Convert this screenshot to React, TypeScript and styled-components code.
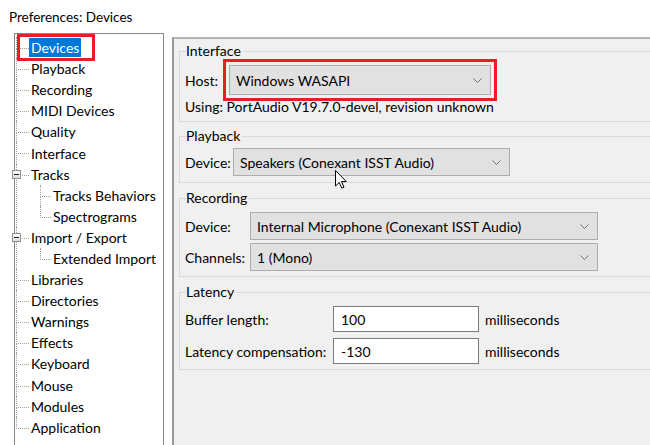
import styled, { createGlobalStyle, css } from "styled-components";

const GlobalStyle = createGlobalStyle`
  html, body {
    margin: 0;
    padding: 0;
    background: #ffffff;
    overflow: hidden;
  }
  body {
    font-family: Lato, "Liberation Sans", Arial, sans-serif;
    font-size: 14px;
    color: #000000;
  }
  * {
    box-sizing: border-box;
  }
`;

const LINE = "#a0a0a0";
const MARK = "#ec1c24";

// Window: whole preferences dialog
const Window = styled.div`
  width: 650px;
  height: 445px;
  display: flex;
  flex-direction: column;
  overflow: hidden;
`;

const TitleBar = styled.div`
  height: 33px;
  flex-shrink: 0;
  padding-left: 9px;
  display: flex;
  align-items: center;
  font-size: 13.5px;
`;

const Body = styled.div`
  flex: 1;
  min-height: 0;
  display: flex;
  align-items: stretch;
  gap: 8px;
`;

/* ---------- tree ---------- */

const Tree = styled.ul`
  margin: 0 0 -20px 14px;
  padding: 3px 0 0 0;
  width: 150px;
  list-style: none;
  background: #ffffff;
  border: 1px solid #828790;
  border-bottom: none;
  flex-shrink: 0;
`;

const SubTree = styled.ul`
  margin: 0;
  padding: 0;
  list-style: none;
`;

const Item = styled.li<{ $child?: boolean; $last?: boolean }>`
  position: relative;
  padding-left: ${({ $child }) => ($child ? 22 : 14)}px;

  /* elbow: vertical half + horizontal dash */
  &::before {
    content: "";
    position: absolute;
    left: ${({ $child }) => ($child ? 11 : 1)}px;
    top: 0;
    width: ${({ $child }) => ($child ? 10 : 12)}px;
    height: 11px;
    border-left: 1px dotted ${LINE};
    border-bottom: 1px dotted ${LINE};
  }

  ${({ $last, $child }) =>
    !$last &&
    css`
      &::after {
        content: "";
        position: absolute;
        left: ${$child ? 11 : 1}px;
        top: 11px;
        bottom: 0;
        border-left: 1px dotted ${LINE};
      }
    `}
`;

const Row = styled.div`
  height: 21.1px;
  display: flex;
  align-items: center;
  white-space: nowrap;
`;

const Label = styled.span<{ $selected?: boolean; $marked?: boolean }>`
  position: relative;
  line-height: 19px;
  padding: 0 2px;
  background: ${({ $selected }) => ($selected ? "#0078d7" : "transparent")};
  color: ${({ $selected }) => ($selected ? "#ffffff" : "#000000")};

  ${({ $marked }) =>
    $marked &&
    css`
      &::after {
        content: "";
        position: absolute;
        inset: -4px -14px -4px -12px;
        border: 3px solid ${MARK};
      }
    `}
`;

// Expander: the little [-] box on a parent node
const Expander = styled.span`
  position: absolute;
  left: -3px;
  top: 6px;
  width: 9px;
  height: 9px;
  border: 1px solid #919191;
  background: linear-gradient(#ffffff, #dcdcdc);
  z-index: 1;

  &::before {
    content: "";
    position: absolute;
    left: 1px;
    right: 1px;
    top: 3px;
    height: 1px;
    background: #1e1e1e;
  }
`;

/* ---------- right panel ---------- */

const Panel = styled.div`
  flex: 1;
  margin: 4px 0 -20px 0;
  padding-left: 5px;
  background: #f0f0f0;
  border-left: 2px solid #979797;
  border-top: 2px solid #b2b2b2;
  overflow: hidden;
`;

const Group = styled.fieldset<{ $top: number; $bottom: number }>`
  margin: ${({ $top }) => $top}px -20px 0 0;
  padding: 0 5px ${({ $bottom }) => $bottom}px 5px;
  min-width: 0;
  border: 1px solid #d8d8d8;
`;

const Legend = styled.legend`
  margin-left: 1px;
  padding: 0 2px 0 0;
  line-height: 16px;
`;

const FieldRow = styled.div<{ $top: number }>`
  display: flex;
  align-items: center;
  margin-top: ${({ $top }) => $top}px;
`;

const FieldLabel = styled.span<{ $w: number }>`
  width: ${({ $w }) => $w}px;
  flex-shrink: 0;
  white-space: nowrap;
`;

const Info = styled.div`
  margin-top: 4px;
  line-height: 16px;
  white-space: nowrap;
`;

const Combo = styled.div<{ $w: number; $h?: number; $marked?: boolean }>`
  position: relative;
  width: ${({ $w }) => $w}px;
  height: ${({ $h }) => $h ?? 28}px;
  padding: 0 8px 0 6px;
  display: flex;
  align-items: center;
  justify-content: space-between;
  background: #e1e1e1;
  border: 1px solid #adadad;
  white-space: nowrap;

  ${({ $marked }) =>
    $marked &&
    css`
      &::after {
        content: "";
        position: absolute;
        inset: -7px;
        border: 3px solid ${MARK};
      }
    `}
`;

const Grid = styled.div<{ $cols: string; $gap: number; $top: number }>`
  display: grid;
  grid-template-columns: ${({ $cols }) => $cols};
  row-gap: ${({ $gap }) => $gap}px;
  align-items: center;
  margin-top: ${({ $top }) => $top}px;
`;

const TextBox = styled.div`
  width: 146px;
  height: 26px;
  padding-left: 7px;
  display: flex;
  align-items: center;
  background: #ffffff;
  border: 1px solid #7a7a7a;
  margin-right: 6px;
`;

const Pointer = styled.svg`
  position: absolute;
  left: 101px;
  top: 21px;
`;

const Chevron = () => (
  <svg width="9" height="5" viewBox="0 0 9 5">
    <polyline points="0.5,0.5 4.5,4.5 8.5,0.5" fill="none" stroke="#707070" strokeWidth="1" />
  </svg>
);

type Node = { name: string; children?: string[] };

const nodes: Node[] = [
  { name: "Devices" },
  { name: "Playback" },
  { name: "Recording" },
  { name: "MIDI Devices" },
  { name: "Quality" },
  { name: "Interface" },
  { name: "Tracks", children: ["Tracks Behaviors", "Spectrograms"] },
  { name: "Import / Export", children: ["Extended Import"] },
  { name: "Libraries" },
  { name: "Directories" },
  { name: "Warnings" },
  { name: "Effects" },
  { name: "Keyboard" },
  { name: "Mouse" },
  { name: "Modules" },
  { name: "Application" },
];

export default function App() {
  return (
    <>
      <GlobalStyle />
      <Window>
        <TitleBar>Preferences: Devices</TitleBar>
        <Body>
          <Tree>
            {nodes.map((n, i) => (
              <Item key={n.name} $last={i === nodes.length - 1}>
                {n.children && <Expander />}
                <Row>
                  <Label $selected={i === 0} $marked={i === 0}>
                    {n.name}
                  </Label>
                </Row>
                {n.children && (
                  <SubTree>
                    {n.children.map((c, j) => (
                      <Item key={c} $child $last={j === n.children!.length - 1}>
                        <Row>
                          <Label>{c}</Label>
                        </Row>
                      </Item>
                    ))}
                  </SubTree>
                )}
              </Item>
            ))}
          </Tree>

          <Panel>
            <Group $top={4} $bottom={6}>
              <Legend>Interface</Legend>
              <FieldRow $top={6}>
                <FieldLabel $w={44}>Host:</FieldLabel>
                <Combo $w={262} $h={30} $marked>
                  <span>Windows WASAPI</span>
                  <Chevron />
                </Combo>
              </FieldRow>
              <Info>Using: PortAudio V19.7.0-devel, revision unknown</Info>
            </Group>

            <Group $top={6} $bottom={6}>
              <Legend>Playback</Legend>
              <FieldRow $top={4}>
                <FieldLabel $w={48}>Device:</FieldLabel>
                <Combo $w={277}>
                  <span>Speakers (Conexant ISST Audio)</span>
                  <Chevron />
                  <Pointer width="12" height="19" viewBox="0 0 12 19">
                    <path
                      d="M0.5 0.5 L0.5 16 L4.2 12.4 L6.8 18.2 L9 17.2 L6.5 11.6 L11.3 11.6 Z"
                      fill="#ffffff"
                      stroke="#000000"
                      strokeWidth="1"
                      strokeLinejoin="round"
                    />
                  </Pointer>
                </Combo>
              </FieldRow>
            </Group>

            <Group $top={7} $bottom={5}>
              <Legend>Recording</Legend>
              <Grid $cols="65px 348px" $gap={3} $top={6}>
                <FieldLabel $w={65}>Device:</FieldLabel>
                <Combo $w={348}>
                  <span>Internal Microphone (Conexant ISST Audio)</span>
                  <Chevron />
                </Combo>
                <FieldLabel $w={65}>Channels:</FieldLabel>
                <Combo $w={348}>
                  <span>1 (Mono)</span>
                  <Chevron />
                </Combo>
              </Grid>
            </Group>

            <Group $top={7} $bottom={5}>
              <Legend>Latency</Legend>
              <Grid $cols="148px 152px auto" $gap={6} $top={6}>
                <FieldLabel $w={148}>Buffer length:</FieldLabel>
                <TextBox>100</TextBox>
                <span>milliseconds</span>
                <FieldLabel $w={148}>Latency compensation:</FieldLabel>
                <TextBox>-130</TextBox>
                <span>milliseconds</span>
              </Grid>
            </Group>
          </Panel>
        </Body>
      </Window>
    </>
  );
}
